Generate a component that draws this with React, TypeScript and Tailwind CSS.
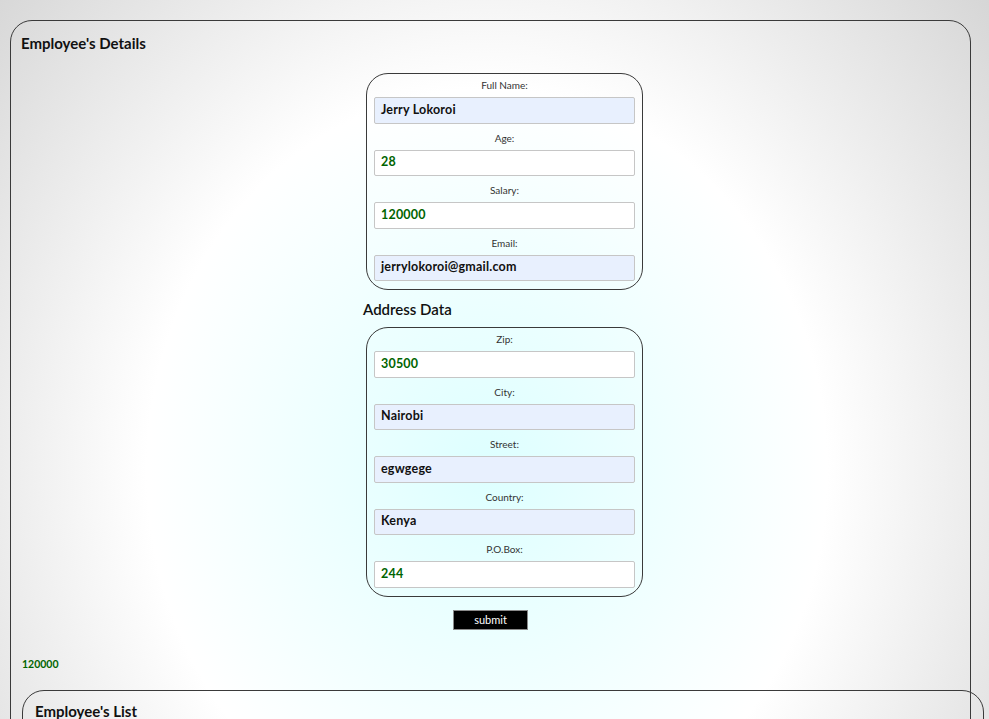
import React from "react";

// ─────────────────────────────────────────────────────────────────────────────
// Data
// ─────────────────────────────────────────────────────────────────────────────

interface Field {
  label: string;
  value: string;
  /** Autofilled inputs get the pale blue browser fill and black text. */
  filled: boolean;
}

const EMPLOYEE_FIELDS: Field[] = [
  { label: "Full Name:", value: "Jerry Lokoroi", filled: true },
  { label: "Age:", value: "28", filled: false },
  { label: "Salary:", value: "120000", filled: false },
  { label: "Email:", value: "jerrylokoroi@gmail.com", filled: true },
];

const ADDRESS_FIELDS: Field[] = [
  { label: "Zip:", value: "30500", filled: false },
  { label: "City:", value: "Nairobi", filled: true },
  { label: "Street:", value: "egwgege", filled: true },
  { label: "Country:", value: "Kenya", filled: true },
  { label: "P.O.Box:", value: "244", filled: false },
];

// ─────────────────────────────────────────────────────────────────────────────
// Pieces
// ─────────────────────────────────────────────────────────────────────────────

function FieldCard({ fields }: Readonly<{ fields: Field[] }>): JSX.Element {
  return (
    <div className="ml-[3px] flex w-[277px] flex-col rounded-[22px] border border-[#3a3a3a] px-[7px] pb-[8px] pt-[5px]">
      {fields.map((f, i) => (
        <React.Fragment key={f.label}>
          <label
            className={`block text-center text-[10px] leading-[12px] text-[#333] ${i > 0 ? "mt-[8px]" : ""}`}
          >
            {f.label}
          </label>
          <div
            className={`mt-[6px] flex h-[26.5px] items-center rounded-[2px] border border-[#c6c6c6] pl-[6px] text-[12.5px] font-bold tracking-[0.2px] ${
              f.filled ? "bg-[#e8f0fe] text-[#111]" : "bg-white text-[#006400]"
            }`}
          >
            {f.value}
          </div>
        </React.Fragment>
      ))}
    </div>
  );
}

// ─────────────────────────────────────────────────────────────────────────────
// Page
// ─────────────────────────────────────────────────────────────────────────────

export default function App(): JSX.Element {
  return (
    <div className="min-h-screen overflow-hidden bg-[radial-gradient(ellipse_680px_762px_at_487px_470px,#ddffff_0%,#ffffff_50%,#d3d3d3_100%)] px-[10px] pt-[20px] font-['Comic_Sans_MS',Lato,sans-serif] text-[#111]">
      <div className="w-[961px] rounded-[22px] border border-[#3a3a3a] px-[10px] pb-[40px] pt-[12px]">
        <h2 className="text-[15px] font-bold leading-[20px]">Employee's Details</h2>

        {/* ── Form ─────────────────────────────────────────────── */}
        <div className="ml-[342px] mt-[20px] w-[290px]">
          <FieldCard fields={EMPLOYEE_FIELDS} />
          <h3 className="mt-[9px] text-[15px] font-semibold leading-[20px]">Address Data</h3>
          <div className="mt-[8px]">
            <FieldCard fields={ADDRESS_FIELDS} />
          </div>
        </div>

        <div className="mt-[13px] flex justify-center">
          <button className="h-[20px] w-[75px] border border-[#8a8a8a] bg-black text-[11px] leading-none text-white">
            submit
          </button>
        </div>

        <p className="ml-[1px] mt-[28px] text-[10.5px] font-bold leading-[12px] text-[#006400]">120000</p>

        {/* ── Employee list ────────────────────────────────────── */}
        <div className="ml-[1px] mt-[20px] h-[160px] w-[962px] rounded-[22px] border border-[#3a3a3a] px-[12px] pt-[11px]">
          <h2 className="text-[15px] font-bold leading-[18px]">Employee's List</h2>
        </div>
      </div>
    </div>
  );
}
